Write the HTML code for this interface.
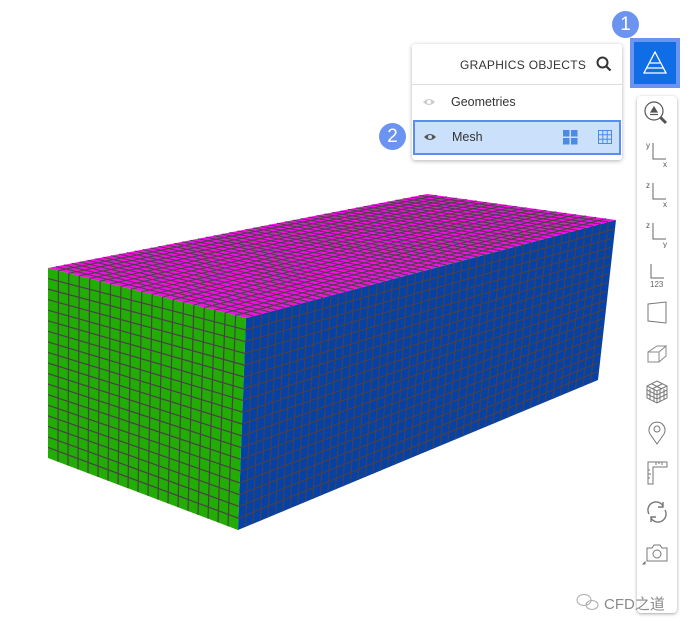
<!DOCTYPE html>
<html><head><meta charset="utf-8"><style>
body{margin:0;width:692px;height:632px;background:#fff;position:relative;overflow:hidden;font-family:"Liberation Sans","Noto Sans CJK SC",sans-serif}
.card{position:absolute;left:412px;top:44px;width:210px;height:116px;background:#fff;border-radius:3px;box-shadow:0 1px 4px rgba(0,0,0,.3)}
.hdr{height:40px;border-bottom:1px solid #ddd;font-size:12px;color:#333;letter-spacing:.3px;line-height:42px;padding-left:48px}
.row{position:absolute;left:0;width:210px;height:35px;font-size:12.5px;color:#333;line-height:35px}
.badge{position:absolute;width:27px;height:27px;border-radius:50%;background:#6b93f0;color:#fff;font-size:19px;text-align:center;line-height:27px}
.tb{position:absolute;left:637px;top:96px;width:40px;height:517px;background:#fff;border-radius:4px;box-shadow:0 1px 3px rgba(0,0,0,.35)}
.ic{position:absolute;left:0;width:40px;height:32px}
</style></head><body>
<svg id="m" width="692" height="632" style="position:absolute;left:0;top:0">
<polygon points="48,268 246,318 238,530 48,458" fill="#22ad04"/>
<polygon points="246,318 616,220 598,380 238,530" fill="#0542a8"/>
<polygon points="48,268 427,194 616,220 246,318" fill="#f010e0"/>
<g id="lines" stroke="#4a4048" stroke-width="1.2" fill="none"></g>
</svg>
<script>
(function(){
var g=document.getElementById('lines'),s='';
function L(a,b){s+='<line x1="'+a[0]+'" y1="'+a[1]+'" x2="'+b[0]+'" y2="'+b[1]+'"/>';}
function lerp(a,b,t){return [a[0]+(b[0]-a[0])*t,a[1]+(b[1]-a[1])*t];}
function face(p0,p1,p2,p3,nu,nv){for(var i=1;i<nu;i++){var t=i/nu;L(lerp(p0,p1,t),lerp(p3,p2,t));}for(var j=1;j<nv;j++){var t=j/nv;L(lerp(p0,p3,t),lerp(p1,p2,t));}}
face([48,268],[246,318],[238,530],[48,458],19,18);
face([246,318],[616,220],[598,380],[238,530],48,18);
var ss=s;s='';
face([48,268],[246,318],[616,220],[427,194],19,48);
g.innerHTML=ss+'<g stroke="#444" stroke-width="1">'+s+'</g>';
})();
</script>
<div class="card">
<div class="hdr">GRAPHICS OBJECTS
<svg style="position:absolute;left:184px;top:12px" width="16" height="16"><circle cx="6.5" cy="6.5" r="5" stroke="#333" stroke-width="2" fill="none"/><line x1="10" y1="10" x2="14.5" y2="14.5" stroke="#333" stroke-width="2.2"/></svg></div>
<div class="row" style="top:41px"><svg style="position:absolute;left:10px;top:12px" width="14" height="10"><path d="M1 5Q7 -1 13 5Q7 11 1 5Z" fill="#ccc"/><circle cx="7" cy="5" r="2" fill="#fff"/></svg><span style="position:absolute;left:39px">Geometries</span></div>
<div class="row" style="top:76px;left:1px;width:204px;height:31px;background:#cbe0fb;border:2px solid #5b8cf0;line-height:31px"><svg style="position:absolute;left:8px;top:10px" width="14" height="10"><path d="M1 5Q7 -1 13 5Q7 11 1 5Z" fill="#555"/><circle cx="7" cy="5" r="2" fill="#cbe0fb"/></svg><span style="position:absolute;left:37px">Mesh</span>
<svg style="position:absolute;left:148px;top:8px" width="15" height="15" fill="#4a8ae8"><rect x="0" y="0" width="6.5" height="6.5"/><rect x="8" y="0" width="6.5" height="6.5"/><rect x="0" y="8" width="6.5" height="6.5"/><rect x="8" y="8" width="6.5" height="6.5"/></svg>
<svg style="position:absolute;left:183px;top:8px" width="14" height="14" stroke="#4a8ae8" fill="none" stroke-width="1"><rect x=".5" y=".5" width="13" height="13"/><path d="M4.8 0V14M9.2 0V14M0 4.8H14M0 9.2H14"/></svg></div>
</div>
<div class="badge" style="left:612px;top:11px">1</div>
<div class="badge" style="left:379px;top:123px">2</div>
<div style="position:absolute;left:630px;top:38px;width:42px;height:42px;border:4px solid #6b93f0;background:#0f6de6"><svg width="42" height="42" stroke="#fff" fill="none" stroke-width="1.3"><path d="M21 10L32 31H10Z M16 21H26 M13 26H29"/></svg></div>
<div class="tb">
<svg class="ic" style="top:0" viewBox="0 0 40 32" stroke="#555" fill="none" stroke-width="1.2"><circle cx="17" cy="15" r="9"/><line x1="23.5" y1="21.5" x2="29" y2="27" stroke-width="3"/><path d="M17 11L20 16H14Z" fill="#555"/><path d="M13 18.5H21"/></svg>
<svg class="ic" style="top:40px" viewBox="0 0 40 32" stroke="#666" fill="none"><path d="M16 7V23H29"/><text x="9" y="12" font-size="8" fill="#555" stroke="none">y</text><text x="26" y="31" font-size="8" fill="#555" stroke="none">x</text></svg>
<svg class="ic" style="top:80px" viewBox="0 0 40 32" stroke="#666" fill="none"><path d="M16 7V23H29"/><text x="9" y="12" font-size="8" fill="#555" stroke="none">z</text><text x="26" y="31" font-size="8" fill="#555" stroke="none">x</text></svg>
<svg class="ic" style="top:120px" viewBox="0 0 40 32" stroke="#666" fill="none"><path d="M16 7V23H29"/><text x="9" y="12" font-size="8" fill="#555" stroke="none">z</text><text x="26" y="31" font-size="8" fill="#555" stroke="none">y</text></svg>
<svg class="ic" style="top:160px" viewBox="0 0 40 32" stroke="#666" fill="none"><path d="M14 8V22H27"/><text x="13" y="31" font-size="8" fill="#666" stroke="none">123</text></svg>
<svg class="ic" style="top:200px" viewBox="0 0 40 32" stroke="#777" fill="none"><path d="M11 8L29 6V27L11 25Z"/></svg>
<svg class="ic" style="top:240px" viewBox="0 0 40 32" stroke="#888" fill="none"><path d="M11 16H22V26H11Z M11 16L20 10H29L22 16 M29 10V20L22 26"/></svg>
<svg class="ic" style="top:280px" viewBox="0 0 40 32" stroke="#777" fill="none"><path d="M20 5L30 10V22L20 27L10 22V10Z M10 10L20 15L30 10 M20 15V27 M13 13V24 M17 14V26 M23 14V26 M27 13V24 M10 14L20 19L30 14 M10 18L20 23L30 18 M15 8L25 13 M25 8L15 13"/></svg>
<svg class="ic" style="top:320px" viewBox="0 0 40 32" stroke="#777" fill="none"><path d="M20 28L13 18A8 8 0 1 1 27 18Z"/><circle cx="20" cy="13" r="3"/></svg>
<svg class="ic" style="top:360px" viewBox="0 0 40 32" stroke="#777" fill="none"><path d="M11 6H30V11H16V28H11Z M19 6V9 M22 6V8 M25 6V9 M11 14H13 M11 18H14 M11 22H13"/></svg>
<svg class="ic" style="top:400px" viewBox="0 0 40 32" stroke="#777" fill="none" stroke-width="1.4"><path d="M12 18A8 8 0 0 1 26 10 M28 14A8 8 0 0 1 14 22"/><path d="M26 6V11H21 M14 26V21H19"/></svg>
<svg class="ic" style="top:440px" viewBox="0 0 40 32" stroke="#777" fill="none"><path d="M10 12H15L17 9H23L25 12H30V25H10Z"/><circle cx="20" cy="18" r="4"/><path d="M6 28L8 28L8 26Z" fill="#666"/></svg>
</div>
<div style="position:absolute;left:604px;top:593px;font-size:15px;color:#8a8a8a">CFD之道</div>
<svg style="position:absolute;left:574px;top:592px" width="28" height="22" stroke="#aaa" fill="none"><ellipse cx="10" cy="8" rx="7" ry="5.5"/><ellipse cx="18" cy="13" rx="6" ry="4.5"/></svg>
</body></html>
